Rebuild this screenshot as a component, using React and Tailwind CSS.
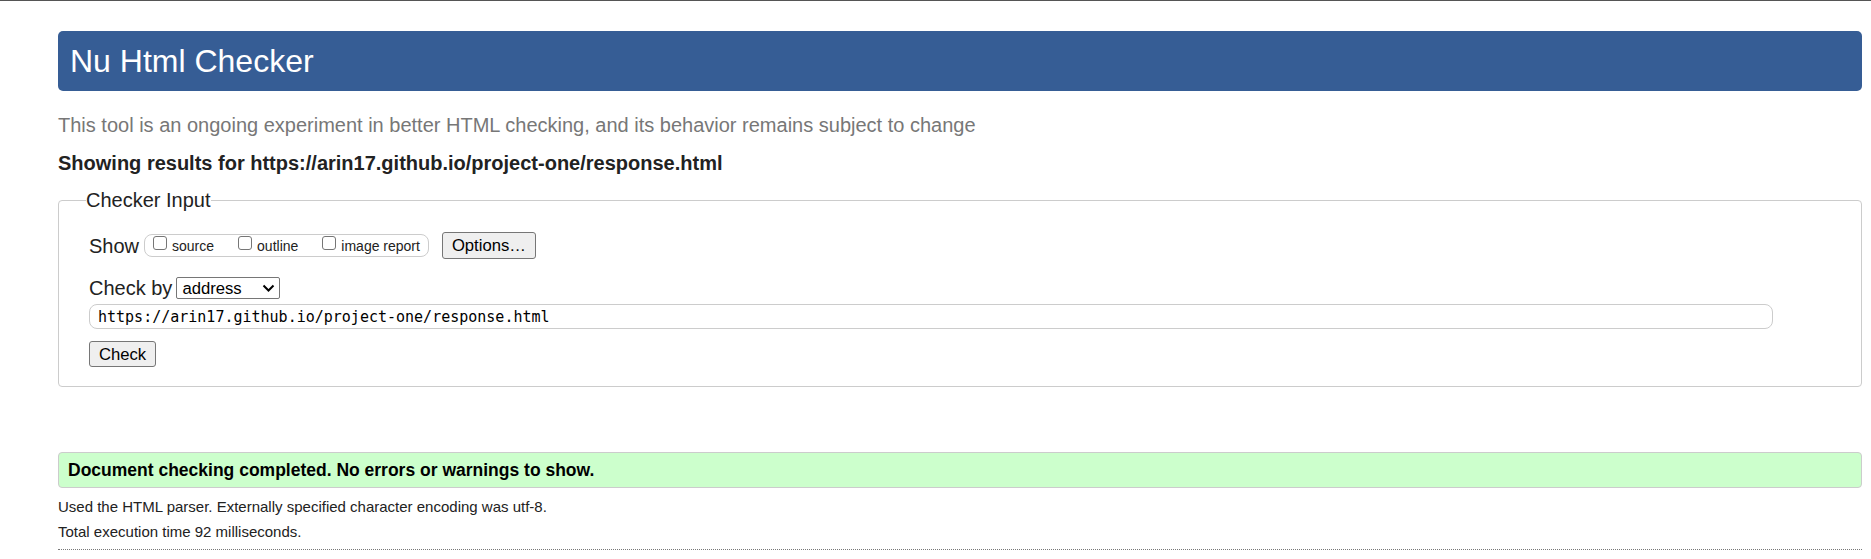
import React from "react";

function Box({ label }) {
  return (
    <span className="flex items-center">
      <span className="w-[14px] h-[14px] mb-[6px] border border-[#767676] rounded-[3px] bg-white" />
      <span className="ml-[5px] text-[14px] leading-[16px] text-[#222]">{label}</span>
    </span>
  );
}

export default function App() {
  return (
    <div className="w-[1871px] h-[559px] bg-white overflow-hidden font-['Liberation_Sans',Arial,sans-serif] text-[#222]">
      <div className="h-px bg-[#555]" />

      <div className="pl-[58px] pr-[9px]">
        {/* Title bar */}
        <div className="mt-[30px] h-[60px] rounded-[5px] bg-[#365d95] flex items-center pl-[12px]">
          <h1 className="text-[32px] leading-[37px] text-white">Nu Html Checker</h1>
        </div>

        <p className="mt-[22px] text-[20px] leading-[24px] text-[#777]">
          This tool is an ongoing experiment in better HTML checking, and its behavior remains subject to change
        </p>

        <p className="mt-[14px] text-[20px] leading-[24px] font-bold text-[#222]">
          Showing results for https://arin17.github.io/project-one/response.html
        </p>

        {/* Checker input */}
        <fieldset className="mt-[13px] border border-[#ccc] rounded-[4px] pl-[30px] pr-[20px] pb-[19px]">
          <legend className="-ml-[3px] text-[20px] leading-[24px] text-[#222]">Checker Input</legend>

          <div className="mt-[20px] h-[27px] flex items-center">
            <span className="text-[20px] leading-[24px]">Show</span>
            <div className="ml-[5px] h-[23px] rounded-[8px] border border-[#ccc] flex items-center pl-[8px] pr-[8px] gap-[24px]">
              <Box label="source" />
              <Box label="outline" />
              <Box label="image report" />
            </div>
            <button className="ml-[13px] h-[27px] w-[94px] bg-[#efefef] border border-[#767676] rounded-[3px] text-[16.67px] leading-[19px] text-black">
              Options…
            </button>
          </div>

          <div className="mt-[18px] h-[22px] flex items-center">
            <span className="text-[20px] leading-[24px]">Check by</span>
            <div className="ml-[4px] w-[104px] h-[22px] border border-[#767676] rounded-[2px] bg-white flex items-center justify-between pl-[5px] pr-[4px]">
              <span className="text-[16.67px] leading-[19px] text-black">address</span>
              <svg width="13" height="9" viewBox="0 0 13 9" fill="none">
                <path d="M1.5 1.5 L6.5 6.5 L11.5 1.5" stroke="#000" strokeWidth="2" />
              </svg>
            </div>
          </div>

          <div className="mt-[5px] w-[1684px] h-[25px] border border-[#ccc] rounded-[8px] flex items-center pl-[8px]">
            <span className="font-['DejaVu_Sans_Mono',monospace] text-[15px] leading-[18px] text-black">
              https://arin17.github.io/project-one/response.html
            </span>
          </div>

          <button className="mt-[12px] h-[26px] w-[67px] bg-[#efefef] border border-[#767676] rounded-[3px] text-[16.67px] leading-[19px] text-black">
            Check
          </button>
        </fieldset>

        {/* Result */}
        <div className="mt-[65px] h-[36px] bg-[#ccffcc] border border-[#ccc] rounded-[4px] flex items-center pl-[9px]">
          <span className="text-[17.5px] leading-[21px] font-bold text-black">
            Document checking completed. No errors or warnings to show.
          </span>
        </div>

        <p className="mt-[10px] text-[15px] leading-[17px]">
          Used the HTML parser. Externally specified character encoding was utf-8.
        </p>
        <p className="mt-[8px] text-[15px] leading-[17px]">Total execution time 92 milliseconds.</p>

        <div className="mt-[9px] border-t border-dotted border-[#777]" />
      </div>
    </div>
  );
}
